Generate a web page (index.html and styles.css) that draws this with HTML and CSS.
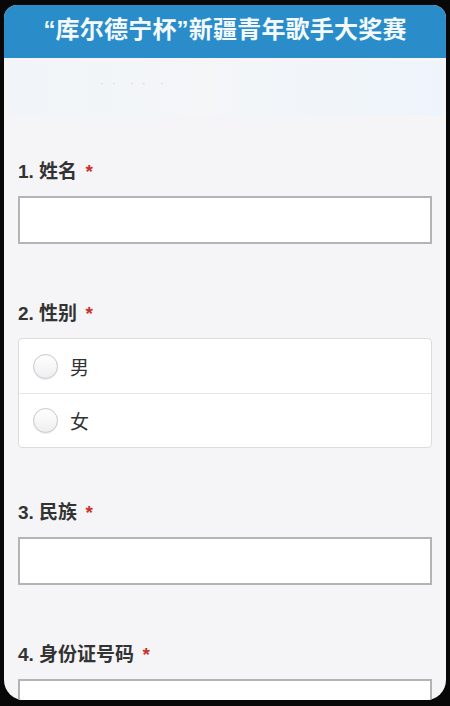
FILE: index.html
```html
<!DOCTYPE html>
<html>
<head>
    <meta charset="utf-8">
    <title>“库尔德宁杯”新疆青年歌手大奖赛</title>
    <link rel="stylesheet" href="styles.css">
</head>
<body>
    <div class="screen">
        <div class="header">“库尔德宁杯”新疆青年歌手大奖赛</div>

        <div class="banner">
            <span class="banner-text">· ·  · ·  ·</span>
        </div>

        <form class="survey">
            <div class="question">
                <label class="q-title" for="name">1. 姓名 <span class="req">*</span></label>
                <input type="text" id="name" class="text-input">
            </div>

            <div class="question question-choice">
                <div class="q-title">2. 性别 <span class="req">*</span></div>
                <div class="choices">
                    <label class="choice">
                        <span class="radio"></span>
                        <span class="choice-text">男</span>
                    </label>
                    <label class="choice">
                        <span class="radio"></span>
                        <span class="choice-text">女</span>
                    </label>
                </div>
            </div>

            <div class="question">
                <label class="q-title" for="nation">3. 民族 <span class="req">*</span></label>
                <input type="text" id="nation" class="text-input">
            </div>

            <div class="question">
                <label class="q-title" for="idcard">4. 身份证号码 <span class="req">*</span></label>
                <input type="text" id="idcard" class="text-input">
            </div>
        </form>
    </div>
</body>
</html>
```

FILE: styles.css
```css
html,
body {
    margin: 0;
    padding: 0;
    background-color: #080808;
    height: 706px;
    overflow: hidden;
}
body {
    font-family: Arial, "Liberation Sans", "Noto Sans CJK SC", sans-serif;
    padding: 5px 4px 0;
    box-sizing: border-box;
}
.screen {
    height: 695px;
    background-color: #f5f5f7;
    border-radius: 13px 13px 20px 20px;
    overflow: hidden;
}
.header {
    height: 53px;
    background-color: #2a8dca;
    color: #f4f9fd;
    font-size: 24px;
    font-weight: bold;
    line-height: 50px;
    text-align: center;
    letter-spacing: 0.2px;
}
.banner {
    margin: 4px 4px 0;
    height: 54px;
    background: linear-gradient(90deg, #f1f5f9 0%, #f4f6f8 45%, #eef4fb 100%);
}
.banner-text {
    display: block;
    padding: 16px 0 0 92px;
    font-size: 10px;
    color: #c9ccd2;
    letter-spacing: 3px;
    white-space: pre;
}
.survey {
    padding: 44px 14px 0;
}
.question {
    margin-bottom: 58px;
}
.question-choice {
    margin-bottom: 53px;
}
.q-title {
    display: block;
    font-size: 19px;
    font-weight: bold;
    line-height: 24px;
    color: #333;
    margin-bottom: 12px;
}
.req {
    color: #c8332d;
    margin-left: 3px;
}
.text-input {
    display: block;
    width: 100%;
    height: 48px;
    box-sizing: border-box;
    border: 2px solid #b4b4b6;
    background-color: #fff;
    margin: 0;
}
.choices {
    background-color: #fff;
    border: 1px solid #dcdcde;
    border-radius: 4px;
}
.choice {
    display: flex;
    align-items: center;
    height: 54px;
    padding-left: 14px;
    box-sizing: border-box;
}
.choice + .choice {
    border-top: 1px solid #e6e6e8;
}
.radio {
    width: 23px;
    height: 23px;
    border-radius: 50%;
    border: 1px solid #c8c8cc;
    background: linear-gradient(180deg, #ffffff 0%, #eeeef0 100%);
    box-shadow: 0 1px 1px rgba(0, 0, 0, 0.08);
}
.choice-text {
    margin-left: 12px;
    font-size: 19px;
    color: #333;
}
```
